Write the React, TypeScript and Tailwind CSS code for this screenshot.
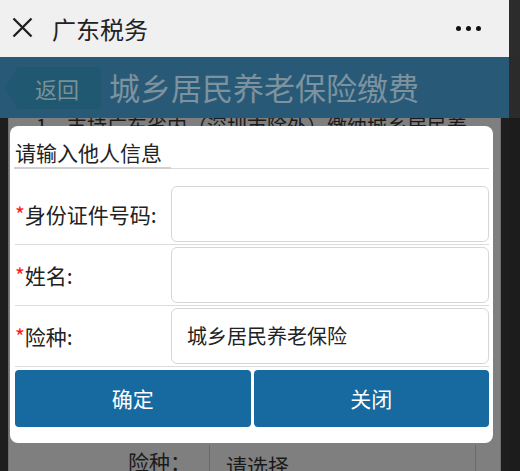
import React from "react";

const font = { fontFamily: '"Noto Sans CJK SC", "Noto Sans", sans-serif' };

function FormRow({ label, value, first }: { label: string; value?: string; first?: boolean }) {
  return (
    <div className={`flex items-center border-b border-[#dcdcdc] pb-[2px] ${first ? "pt-[17px]" : "pt-[2px]"}`}>
      <div className="w-[156px] shrink-0 text-[21px] leading-none text-[#222]">
        <span className="text-[#ff1a1a]">*</span>
        {label}
      </div>
      <div className="flex h-[56px] flex-1 items-center rounded-[6px] border border-[#d6d6d6] bg-white px-[15px] text-[20px] text-[#222]">
        {value}
      </div>
    </div>
  );
}

export default function App() {
  return (
    <div className="relative flex h-[471px] w-[520px] overflow-hidden bg-[#1e1e1e]" style={font}>
      <div className="flex w-[509px] shrink-0 flex-col">
        {/* wechat nav */}
        <div className="flex h-[57px] items-center bg-[#f0f0f0] pl-[12px] pr-[28px]">
          <svg width="21" height="21" viewBox="0 0 21 21" className="mb-[2px]">
            <path d="M1.5 1.5 L19.5 19.5 M19.5 1.5 L1.5 19.5" stroke="#1e1e1e" strokeWidth="2.3" />
          </svg>
          <span className="ml-[19px] text-[24px] leading-none text-[#222]">广东税务</span>
          <div className="ml-auto flex gap-[5px]">
            <span className="h-[5px] w-[5px] rounded-full bg-[#111]" />
            <span className="h-[5px] w-[5px] rounded-full bg-[#111]" />
            <span className="h-[5px] w-[5px] rounded-full bg-[#111]" />
          </div>
        </div>

        {/* page header (dimmed) */}
        <div className="flex h-[61px] items-center bg-[#285a77] pl-[4px]">
          <div className="relative flex h-[44px] w-[97px] items-center">
            <svg width="97" height="44" viewBox="0 0 97 44" className="absolute inset-0">
              <path d="M14 1 H92 Q97 1 97 6 V38 Q97 43 92 43 H14 L1 22 Z" fill="#1f5870" />
            </svg>
            <span className="relative ml-[31px] text-[22px] leading-none text-[#7b9096]">返回</span>
          </div>
          <span className="mb-[3px] ml-[8px] text-[31px] leading-none text-[#7d929f]">城乡居民养老保险缴费</span>
        </div>

        {/* page body (dimmed) */}
        <div className="mx-[8px] flex flex-1 flex-col justify-between overflow-hidden border-x border-[#6f6f6f] bg-[#7f7f7f]">
          <div className="-mt-[2px] pl-[27px] text-[20px] leading-none whitespace-nowrap text-[#1a1a1a]">
            1、支持广东省内（深圳市除外）缴纳城乡居民养
          </div>
          <div className="flex h-[26px] text-[21px] text-[#1a1a1a]">
            <div className="w-[201px] border-r border-[#6a6a6a] pr-[18px] pt-[1px] text-right leading-[30px]">险种：</div>
            <div className="flex-1 border-r border-[#6a6a6a] pl-[16px] pt-[5px] leading-[30px]">请选择</div>
            <div className="w-[24px]" />
          </div>
        </div>
      </div>

      {/* side strip */}
      <div className="flex flex-1 flex-col">
        <div className="h-[57px] bg-[#2c2c2c]" />
        <div className="h-[61px] bg-[#2b2b2b]" />
        <div className="flex-1 bg-[#1c1c1c]" />
      </div>

      {/* modal */}
      <div className="absolute left-[10px] top-[126px] w-[483px] rounded-[8px] bg-white px-[4px] pb-[16px]">
        <div className="relative flex h-[43px] items-end border-b border-[#dcdcdc] pb-[5px] pl-[1px]">
          <span className="text-[21px] leading-none text-[#222]">请输入他人信息</span>
          <span className="absolute -bottom-[1px] left-0 h-[2px] w-[157px] bg-[#d0d0d0]" />
        </div>
        <div className="pl-[1px]">
          <FormRow label="身份证件号码:" first />
          <FormRow label="姓名:" />
          <FormRow label="险种:" value="城乡居民养老保险" />
        </div>
        <div className="mt-[3px] flex gap-[3px] pl-[1px]">
          <button className="flex h-[57px] flex-1 items-center justify-center rounded-[4px] bg-[#176aa0] text-[21px] text-white">
            确定
          </button>
          <button className="flex h-[57px] flex-1 items-center justify-center rounded-[4px] bg-[#176aa0] text-[21px] text-white">
            关闭
          </button>
        </div>
      </div>
    </div>
  );
}
